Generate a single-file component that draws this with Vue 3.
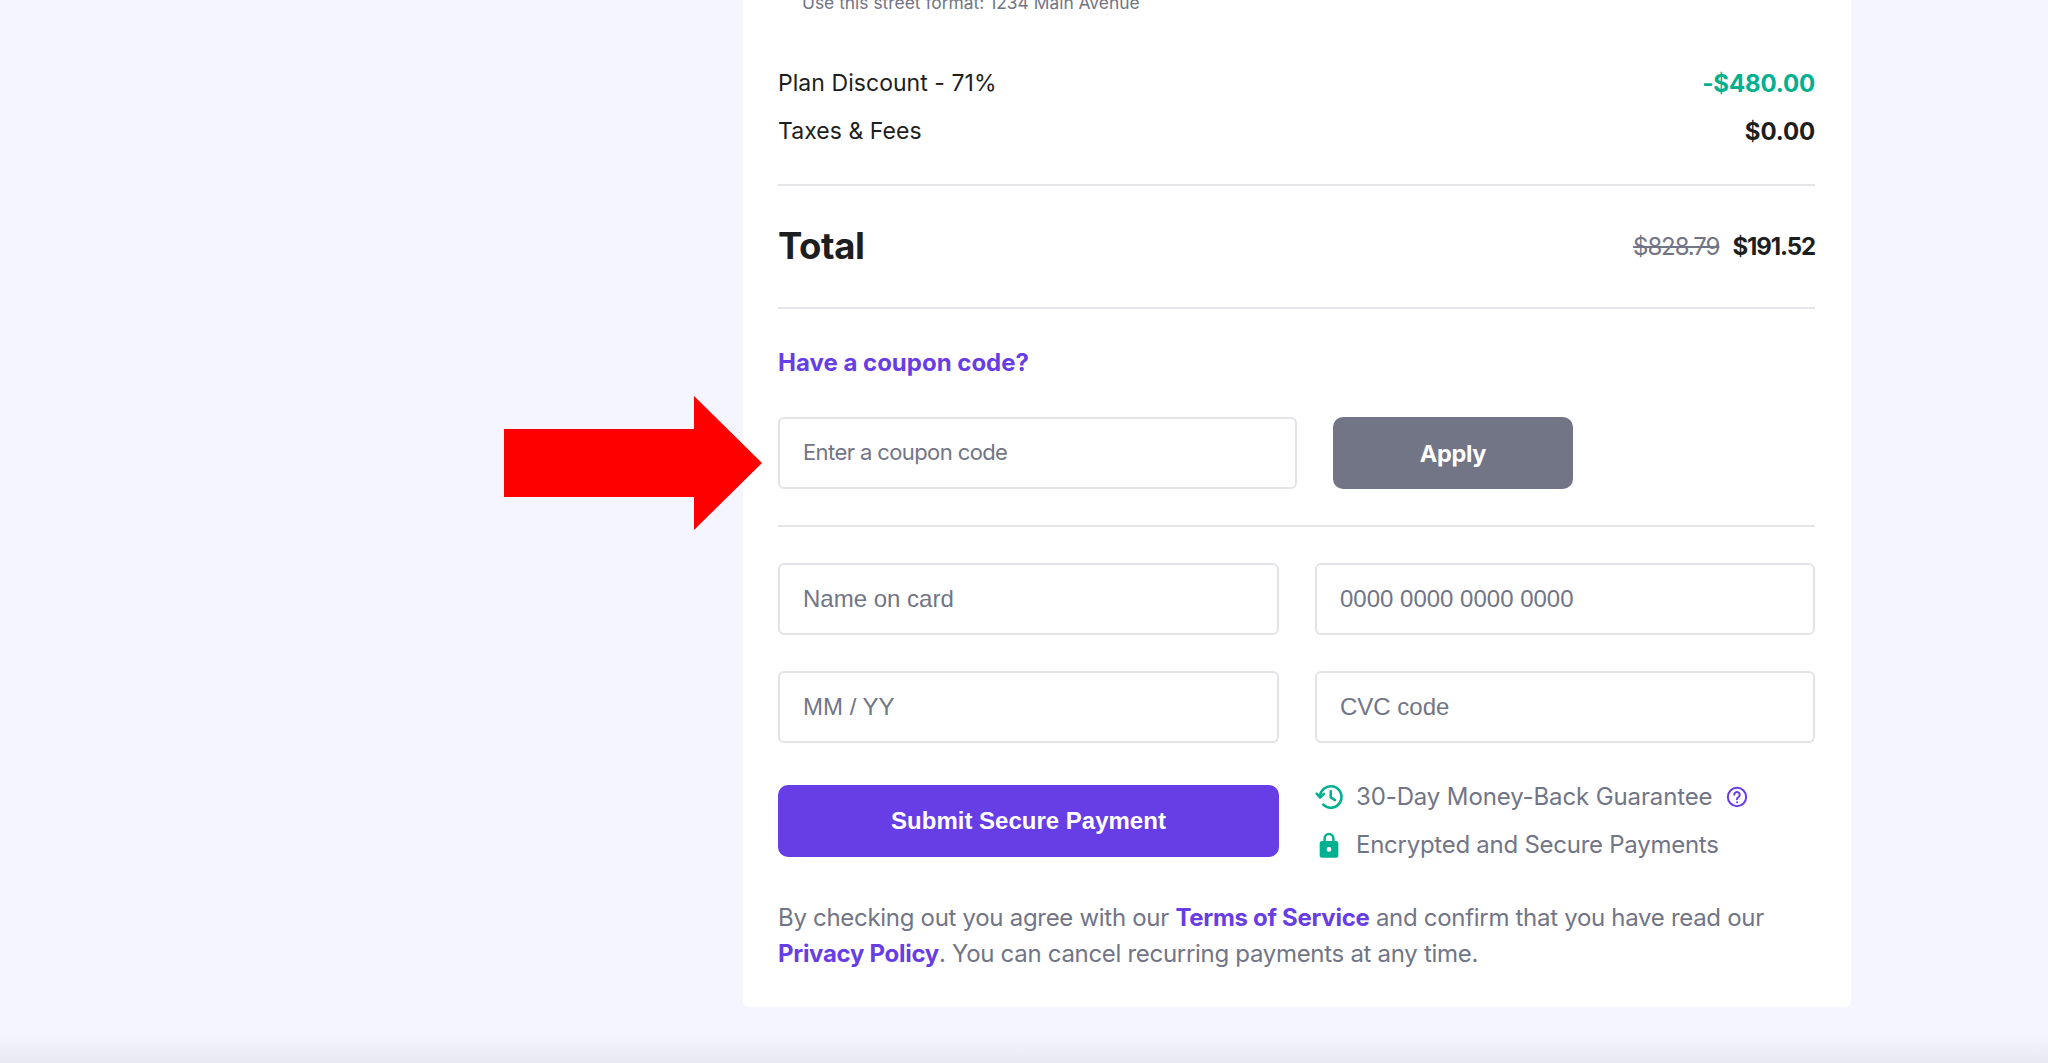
<template>
  <div class="page">
    <div class="card">
      <p class="street-hint">Use this street format: 1234 Main Avenue</p>

      <div class="line-row first">
        <span>Plan Discount - 71%</span>
        <strong class="green">-$480.00</strong>
      </div>
      <div class="line-row">
        <span>Taxes &amp; Fees</span>
        <strong>$0.00</strong>
      </div>

      <div class="total-row">
        <h2>Total</h2>
        <div class="total-prices">
          <s>$828.79</s>
          <strong>$191.52</strong>
        </div>
      </div>

      <div class="coupon">
        <a class="coupon-link">Have a coupon code?</a>
        <div class="coupon-form">
          <input class="field coupon-input" type="text" placeholder="Enter a coupon code" />
          <button class="apply-btn" type="button">Apply</button>
        </div>
      </div>

      <div class="card-fields">
        <input
          v-for="field in fields"
          :key="field"
          class="field helv"
          type="text"
          :placeholder="field"
        />
      </div>

      <div class="pay-row">
        <button class="submit-btn" type="button">Submit Secure Payment</button>
        <ul class="assurances">
          <li>
            <svg class="icon" viewBox="-0.500 0 24 24" fill="none" stroke="#00b090" stroke-width="2.2" stroke-linecap="round" stroke-linejoin="round">
              <path d="M3.800 12A9.200 9.200 0 1 1 6.600 18.600" />
              <path d="M1 9.200l2.800 3.200 3.200-3" />
              <path d="M13 7.200v5.200l3.600 2.200" />
            </svg>
            <span>30-Day Money-Back Guarantee</span>
            <svg class="help" viewBox="0 0 24 24" fill="none" stroke="#673de6" stroke-width="2.2" stroke-linecap="round">
              <circle cx="12" cy="12" r="10" />
              <path d="M9 9.400a3 3 0 1 1 4.600 2.600c-1 .6-1.600 1.200-1.600 2.400" />
              <path d="M12 17.600v.1" />
            </svg>
          </li>
          <li class="tight">
            <svg class="icon" viewBox="0 0 24 24">
              <path fill="#00b090" d="M18 8.500h-1.200V6.400a4.800 4.800 0 0 0-9.600 0v2.100H6a2 2 0 0 0-2 2V21a2 2 0 0 0 2 2h12a2 2 0 0 0 2-2V10.500a2 2 0 0 0-2-2Zm-8.700-2.100a2.700 2.700 0 0 1 5.400 0v2.100H9.300Z" />
              <circle cx="12" cy="15.800" r="2" fill="#fff" />
            </svg>
            <span>Encrypted and Secure Payments</span>
          </li>
        </ul>
      </div>

      <p class="terms">
        By checking out you agree with our <a>Terms of Service</a> and confirm that you have read our
        <a>Privacy Policy</a>. You can cancel recurring payments at any time.
      </p>
    </div>

    <!-- annotation drawn on top of the screenshot -->
    <svg class="arrow" viewBox="0 0 258 134">
      <polygon points="0,33 190,33 190,0 258,67 190,134 190,101 0,101" fill="#ff0000" />
    </svg>

    <div class="page-shade"></div>
  </div>
</template>

<script setup>
const fields = ['Name on card', '0000 0000 0000 0000', 'MM / YY', 'CVC code']
</script>

<style>
html,
body {
  margin: 0;
  height: 100%;
  overflow: hidden;
  background: #f4f5ff;
}
</style>

<style scoped>
.page {
  position: relative;
  height: 1063px;
  overflow: hidden;
  background: #f4f5ff;
  font-family: "Inter", "Liberation Sans", sans-serif;
  color: #1d1e20;
}

.card {
  box-sizing: border-box;
  width: 1108px;
  height: 1007px;
  margin-left: 743px;
  padding: 0 36px 0 35px;
  background: #fff;
  border-radius: 0 0 6px 6px;
}

.street-hint {
  margin: 0 0 0 24px;
  height: 12px;
  line-height: 6px;
  font-size: 17.400px;
  color: #727586;
}

.line-row {
  display: flex;
  justify-content: space-between;
  align-items: center;
  height: 48px;
  font-size: 23px;
  letter-spacing: 0.05px;
}

.line-row.first {
  margin-top: 47px;
}

.line-row strong {
  font-weight: 700;
  font-size: 24px;
  letter-spacing: -0.15px;
}

.green {
  color: #00b090;
}

.total-row {
  display: flex;
  justify-content: space-between;
  align-items: center;
  height: 121px;
  margin-top: 29px;
  border-top: 2px solid #e3e5e9;
  border-bottom: 2px solid #e3e5e9;
}

.total-row h2 {
  margin: -2px 0 0;
  font-size: 36.500px;
  font-weight: 700;
  letter-spacing: -0.4px;
}

.total-prices {
  display: flex;
  gap: 13px;
  font-size: 24px;
  letter-spacing: -1.1px;
}

.total-prices s {
  color: #727586;
}

.coupon {
  padding: 36px 0 36px;
  border-bottom: 2px solid #e3e5e9;
}

.coupon-link {
  display: block;
  font-size: 24px;
  font-weight: 700;
  line-height: 36px;
  color: #673de6;
}

.coupon-form {
  display: flex;
  gap: 36px;
  margin-top: 36px;
}

.field {
  box-sizing: border-box;
  height: 72px;
  padding: 0 23px;
  border: 2px solid #e3e4e8;
  border-radius: 6px;
  background: #fff;
  outline: none;
  font: 400 24px "Liberation Sans", sans-serif;
  color: #1d1e20;
}

.field::placeholder {
  color: #727586;
  opacity: 1;
}

.coupon-input {
  width: 519px;
  padding-bottom: 2px;
  font-family: "Inter", sans-serif;
  font-size: 22px;
  letter-spacing: -0.6px;
}

.apply-btn {
  width: 240px;
  height: 72px;
  padding: 0;
  border: 0;
  border-radius: 10px;
  background: #727586;
  color: #fff;
  font: 700 23.500px "Inter", sans-serif;
  letter-spacing: -0.3px;
}

.card-fields {
  display: grid;
  grid-template-columns: 501px 500px;
  gap: 36px;
  margin-top: 36px;
}

.field.helv {
  width: 100%;
}

.pay-row {
  display: flex;
  gap: 36px;
  margin-top: 42px;
}

.submit-btn {
  flex: none;
  width: 501px;
  height: 72px;
  border: 0;
  border-radius: 10px;
  background: #673de6;
  color: #fff;
  font: 700 24px "Liberation Sans", sans-serif;
}

.assurances {
  display: flex;
  flex-direction: column;
  gap: 12px;
  margin: -6px 0 0;
  padding: 0;
  list-style: none;
  font-size: 24px;
  line-height: 36px;
  letter-spacing: -0.12px;
  color: #727586;
}

.assurances li {
  display: flex;
  align-items: center;
}

.assurances li.tight {
  letter-spacing: -0.26px;
}

.icon {
  width: 28px;
  height: 28px;
  margin-right: 13px;
}

.help {
  width: 22px;
  height: 22px;
  margin-left: 14px;
}

.terms {
  margin: 37px 0 0;
  font-size: 24px;
  line-height: 36px;
  letter-spacing: -0.3px;
  color: #727586;
}

.terms a {
  font-weight: 700;
  color: #673de6;
}

.arrow {
  position: absolute;
  left: 504px;
  top: 396px;
  width: 258px;
  height: 134px;
}

.page-shade {
  position: absolute;
  left: 0;
  right: 0;
  bottom: 0;
  height: 30px;
  background: linear-gradient(rgba(29, 30, 32, 0), rgba(29, 30, 32, 0.055));
}
</style>
